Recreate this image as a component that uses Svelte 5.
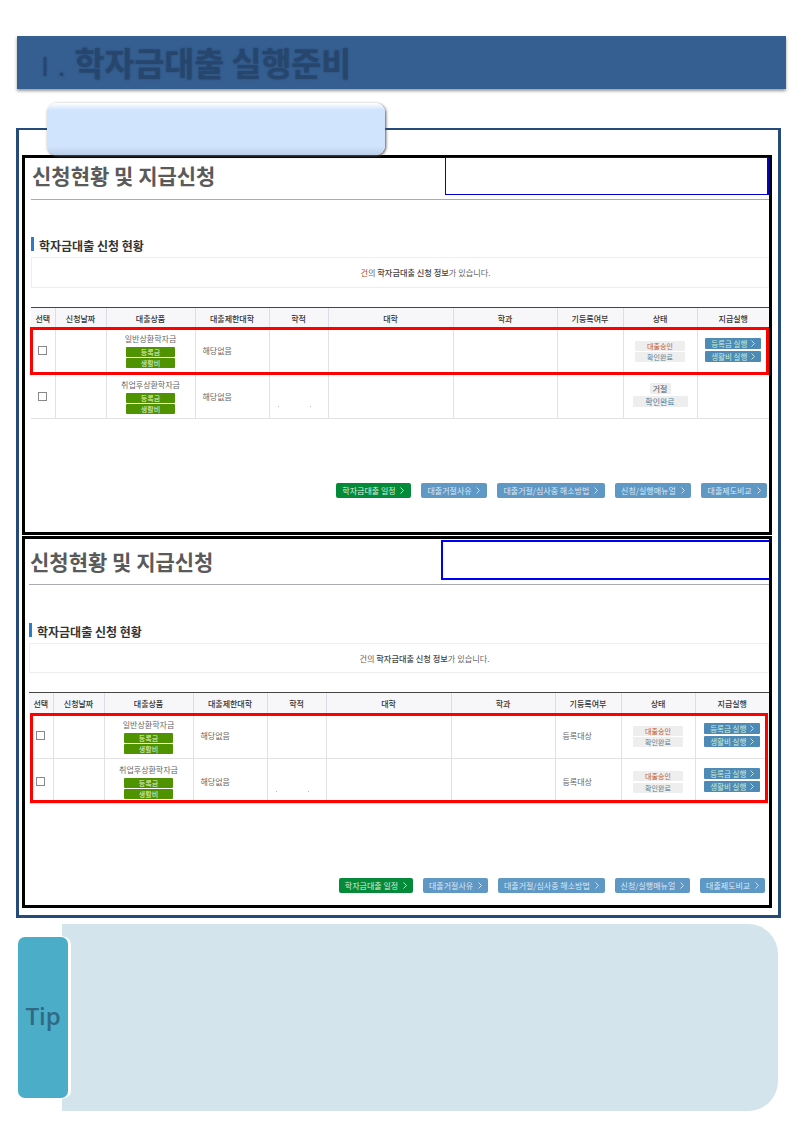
<script>
  const cols = ['선택', '신청날짜', '대출상품', '대출제한대학', '학적', '대학', '학과', '기등록여부', '상태', '지급실행'];
  const widths = [24, 51, 89, 74, 59, 125, 104, 66, 74];
  const links = ['대출거절사유', '대출거절/심사중 해소방법', '신청/실행매뉴얼', '대출제도비교'];

  const panels = [
    {
      id: 'a',
      rows: [
        { name: '일반상환학자금', reg: '', approved: true, run: true, dots: false },
        { name: '취업후상환학자금', reg: '', approved: false, run: false, dots: true }
      ]
    },
    {
      id: 'b',
      rows: [
        { name: '일반상환학자금', reg: '등록대상', approved: true, run: true, dots: false },
        { name: '취업후상환학자금', reg: '등록대상', approved: true, run: true, dots: true }
      ]
    }
  ];
</script>

{#snippet chevron()}
  <svg class="chev" width="4" height="7" viewBox="0 0 4 7"><path d="M0.5 0.5L3.5 3.5L0.5 6.5" fill="none" stroke="currentColor" stroke-width="0.9" /></svg>
{/snippet}

<div class="page">
  <h1 class="banner"><span class="num">Ⅰ.</span> 학자금대출 실행준비</h1>

  <div class="frame">
    <div class="tab"></div>

    {#each panels as panel}
      <section class="panel {panel.id}">
        <div class="titlerow">
          <h2>신청현황 및 지급신청</h2>
          <div class="bluebox"></div>
        </div>

        <h3>학자금대출 신청 현황</h3>
        <div class="info"><span class="count">건</span>의 <b>학자금대출 신청 정보</b>가 있습니다.</div>

        <div class="tablewrap">
          <table>
            <colgroup>
              {#each widths as w}
                <col style="width:{w}px" />
              {/each}
              <col />
            </colgroup>
            <thead>
              <tr>
                {#each cols as c}
                  <th>{c}</th>
                {/each}
              </tr>
            </thead>
            <tbody>
              {#each panel.rows as row}
                <tr>
                  <td class="mid"><input type="checkbox" /></td>
                  <td></td>
                  <td class="mid">
                    <div class="pname">{row.name}</div>
                    <div class="tag">등록금</div>
                    <div class="tag">생활비</div>
                  </td>
                  <td class="txt">해당없음</td>
                  <td class="dotcell">{#if row.dots}<span class="dots"><i></i><i></i></span>{/if}</td>
                  <td></td>
                  <td></td>
                  <td class="txt">{row.reg}</td>
                  <td class="mid">
                    {#if row.approved}
                      <div class="states">
                        <div class="state ok">대출승인</div>
                        <div class="state done">확인완료</div>
                      </div>
                    {:else}
                      <div class="state no">거절</div>
                      <div class="state wide">확인완료</div>
                    {/if}
                  </td>
                  <td class="mid">
                    {#if row.run}
                      <div class="run">등록금 실행 {@render chevron()}</div>
                      <div class="run">생활비 실행 {@render chevron()}</div>
                    {/if}
                  </td>
                </tr>
              {/each}
            </tbody>
          </table>
          <div class="redbox"></div>
        </div>

        <div class="actions">
          <span class="btn green">학자금대출 일정 {@render chevron()}</span>
          {#each links as l}
            <span class="btn">{l} {@render chevron()}</span>
          {/each}
        </div>
      </section>
    {/each}
  </div>

  <div class="tip">
    <div class="tiplabel">Tip</div>
    <div class="tipbody"></div>
  </div>
</div>

<style>
  :global(body) {
    margin: 0;
    background: #fff;
  }

  * {
    box-sizing: border-box;
  }

  .page {
    width: 802px;
    height: 1135px;
    padding-top: 36px;
    overflow: hidden;
    font-family: "Noto Sans CJK KR", "Noto Sans", sans-serif;
  }

  .banner {
    margin: 0 0 0 17px;
    width: 769px;
    height: 53px;
    padding-left: 15px;
    background: #355f90;
    box-shadow: 0 2px 3px #999;
    color: #27466e;
    font-size: 32.5px;
    font-weight: 700;
    line-height: 52px;
    text-shadow: 0 0 2px #27466e;
  }

  .num {
    margin-right: 2px;
    font-weight: 400;
    font-size: 26px;
  }

  .frame {
    position: relative;
    margin: 39px 0 0 16px;
    width: 765px;
    border: 3px solid #254a7c;
    border-top-width: 2px;
    padding: 25px 6px 7px 3px;
  }

  .tab {
    position: absolute;
    left: 28px;
    top: -27px;
    width: 338px;
    height: 52px;
    border-radius: 9px;
    background: linear-gradient(#fff 0, #d0e4fd 7px, #d0e4fd 43px, #bcd0ea 100%);
    box-shadow: 1px 1px 3px #555;
    z-index: 1;
  }

  .panel {
    border: 3px solid #000;
    background: #fff;
  }

  .panel.a {
    height: 380px;
    padding-left: 6px;
    margin-bottom: 1px;
  }

  .panel.b {
    height: 372px;
    padding-left: 4px;
  }

  .titlerow {
    display: flex;
    justify-content: space-between;
    height: 42px;
    border-bottom: 1px solid #aaaab2;
  }

  .panel.b .titlerow {
    height: 46px;
  }

  h2 {
    margin: 3px 0 0 1px;
    font-size: 21px;
    line-height: 28px;
    font-weight: 700;
    color: #5a5a5a;
  }

  .panel.b h2 {
    margin-top: 8px;
  }

  .bluebox {
    width: 324px;
    height: 38px;
    margin-top: -1px;
    border: 1px solid #0000d0;
    border-right-width: 2px;
  }

  .panel.b .bluebox {
    width: 328px;
    height: 40px;
    margin-top: 1px;
    border: 2px solid #0000f0;
    border-right: 0;
  }

  h3 {
    margin: 37px 0 6px;
    height: 14px;
    padding-left: 5px;
    border-left: 3px solid #2a7cc7;
    font-size: 12px;
    line-height: 17px;
    font-weight: 700;
    color: #333;
  }

  .panel.b h3 {
    margin-top: 38px;
  }

  .info {
    height: 31px;
    padding-left: 51px;
    border: 1px solid #eee;
    border-right-color: #f6f6f6;
    text-align: center;
    font-size: 8.2px;
    line-height: 29px;
    color: #666;
  }

  .info b {
    font-weight: 500;
    color: #444;
  }

  .panel.b .info {
    height: 30px;
    line-height: 28px;
  }

  .count {
    color: #a0522d;
  }

  .tablewrap {
    position: relative;
    margin-top: 19px;
  }

  table {
    width: 100%;
    table-layout: fixed;
    border-collapse: collapse;
    font-size: 8px;
    color: #666;
  }

  th {
    height: 21px;
    padding: 0;
    border-top: 1px solid #444;
    border-left: 1px solid #dcdcea;
    background: #f7f7fa;
    font-weight: 500;
    color: #333;
  }

  th:first-child,
  td:first-child {
    border-left: 0;
  }

  td {
    height: 45px;
    padding: 0;
    border-left: 1px solid #e2e2e2;
    border-bottom: 1px solid #e2e2e2;
  }

  .mid {
    text-align: center;
  }

  .txt {
    padding-left: 7px;
  }

  input {
    appearance: none;
    display: block;
    width: 9px;
    height: 9px;
    margin: 0 auto;
    border: 1px solid #888;
    background: #fff;
  }

  .pname {
    line-height: 14px;
    margin-bottom: 1px;
  }

  .panel.b tr:first-child .pname {
    margin-top: 2px;
  }

  .tag {
    width: 49px;
    height: 10px;
    margin: 0 auto 1px;
    border-radius: 1px;
    background: #4f9300;
    color: #e8f5d0;
    font-size: 7px;
    line-height: 10px;
  }

  .states {
    padding-top: 3px;
  }

  .state {
    width: 50px;
    height: 10px;
    margin: 0 auto 1.5px;
    border-radius: 1px;
    background: #eee;
    font-size: 7px;
    line-height: 10px;
  }

  .ok {
    color: #c0582f;
  }

  .done {
    color: #5a7f95;
  }

  .no {
    width: 21px;
    height: 11px;
    margin-bottom: 2px;
    color: #555;
    font-size: 8px;
    line-height: 11px;
  }

  .wide {
    width: 55px;
    height: 11px;
    color: #4a7d9b;
    font-size: 8px;
    line-height: 11px;
  }

  .run {
    display: flex;
    align-items: center;
    justify-content: center;
    gap: 4px;
    width: 56px;
    height: 11px;
    margin: 0 auto 2px;
    background: #4d8ab5;
    border-radius: 1px;
    color: #c8ecd8;
    font-size: 7.5px;
    line-height: 11px;
  }

  .dotcell {
    vertical-align: bottom;
  }

  .dots {
    display: flex;
    justify-content: space-between;
    width: 33px;
    margin: 0 0 11px 8px;
  }

  .dots i {
    width: 1px;
    height: 1px;
    background: #bbb;
  }

  .redbox {
    position: absolute;
    left: -1px;
    right: 0;
    top: 20px;
    height: 48px;
    border: 3px solid #f00;
    pointer-events: none;
  }

  .panel.b .redbox {
    left: 1px;
    right: 1px;
    top: 21px;
    height: 90px;
  }

  .actions {
    display: flex;
    justify-content: flex-end;
    gap: 10px;
    margin: 64px 2px 0 0;
  }

  .panel.b .actions {
    margin: 74px 4px 0 0;
  }

  .btn {
    display: flex;
    align-items: center;
    gap: 3px;
    height: 15px;
    padding: 0 6.5px;
    border-radius: 2px;
    background: #5f97c5;
    color: #dbe9f3;
    font-size: 8px;
    white-space: pre;
  }

  .panel.b .btn {
    padding: 0 6px;
  }

  .green {
    background: #058a3a;
    color: #d8f0dc;
  }

  .chev {
    flex: none;
  }

  .tip {
    position: relative;
    margin: 6px 0 0 18px;
    height: 187px;
  }

  .tipbody {
    margin-left: 44px;
    width: 716px;
    height: 187px;
    background: #d3e4ec;
    border-radius: 0 30px 30px 0;
  }

  .tiplabel {
    position: absolute;
    left: 0;
    top: 13px;
    width: 50px;
    height: 161px;
    padding-bottom: 4px;
    display: flex;
    align-items: center;
    justify-content: center;
    background: #4badc8;
    border-radius: 7px;
    box-shadow: 3px 0 0 #fff, 0 -1px 0 #fff, 0 1px 0 #fff;
    color: #2f6a85;
    font-family: "Open Sans", sans-serif;
    font-size: 24px;
    font-weight: 600;
  }
</style>
